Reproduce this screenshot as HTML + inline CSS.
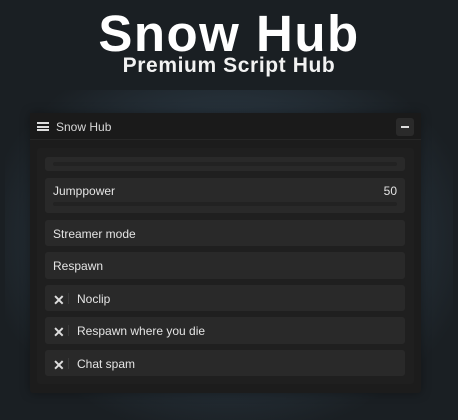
<!DOCTYPE html>
<html><head><style>
*{margin:0;padding:0;box-sizing:border-box}
body{width:458px;height:410px;overflow:hidden;background:#1a1f23;font-family:"Liberation Sans",sans-serif;position:relative}
.glow{position:absolute;left:5px;top:90px;width:448px;height:330px;background:radial-gradient(ellipse at 50% 45%,#2e3c46 0%,#26313a 50%,#1a1f23 78%);}
h1{position:absolute;top:4px;left:0;width:458px;text-align:center;color:#fff;font-size:51px;font-weight:bold;letter-spacing:1.5px}
h2{position:absolute;top:54px;left:0;width:458px;text-align:center;color:#f2f2f2;font-size:21px;font-weight:bold;letter-spacing:0.6px}
.win{position:absolute;left:30px;top:113px;width:391px;height:280px;background:#1c1c1c;border-radius:3px;box-shadow:0 0 10px rgba(0,0,0,.35)}
.hd{height:27px;background:#1a1a1a;border-bottom:1px solid #262626;position:relative;color:#d8d8d8;font-size:12px}
.hd .t{position:absolute;left:26px;top:7px}
.hm{position:absolute;left:7px;top:9px;width:12px;height:9px;border-top:2px solid #ddd;border-bottom:2px solid #ddd}
.hm:after{content:"";position:absolute;left:0;top:1.5px;width:12px;height:2px;background:#ddd}
.mn{position:absolute;right:7px;top:5px;width:18px;height:18px;background:#2a2a2a;border-radius:3px}
.mn:after{content:"";position:absolute;left:5px;top:8px;width:8px;height:2px;background:#ddd}
.in{position:absolute;left:7px;top:35px;width:377px;height:236px;background:#1f1f1f;border-radius:3px}
.r{position:absolute;left:8px;width:360px;background:#292929;border-radius:3px;color:#e4e4e4;font-size:12px}
.r span{position:absolute;top:7px}
.bar{position:absolute;left:8px;right:8px;height:4px;background:#222;border-radius:2px}
.x{position:absolute;left:8px;top:6px;color:#ddd;font-size:14px;font-weight:bold}
.sep{position:absolute;left:23px;top:8px;width:1px;height:11px;background:#3a3a3a}
</style></head><body>
<div class="glow"></div>
<h1>Snow Hub</h1>
<h2>Premium Script Hub</h2>
<div class="win">
<div class="hd"><div class="hm"></div><span class="t">Snow Hub</span><div class="mn"></div></div>
<div class="in">
<div class="r" style="top:9px;height:14px"><div class="bar" style="top:5px"></div></div>
<div class="r" style="top:30px;height:35px"><span style="left:8px;top:6px">Jumppower</span><span style="right:8px;top:6px">50</span><div class="bar" style="top:24px"></div></div>
<div class="r" style="top:72px;height:26px"><span style="left:8px">Streamer mode</span></div>
<div class="r" style="top:104px;height:27px"><span style="left:8px">Respawn</span></div>
<div class="r" style="top:137px;height:26px"><span class="x">✕</span><div class="sep"></div><span style="left:32px">Noclip</span></div>
<div class="r" style="top:169px;height:27px"><span class="x">✕</span><div class="sep"></div><span style="left:32px">Respawn where you die</span></div>
<div class="r" style="top:202px;height:26px"><span class="x">✕</span><div class="sep"></div><span style="left:32px">Chat spam</span></div>
</div>
</div>
</body></html>
